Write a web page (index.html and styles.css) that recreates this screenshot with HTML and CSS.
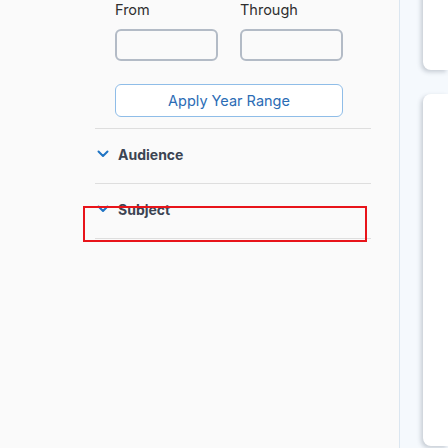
FILE: index.html
```html
<!DOCTYPE html>
<html>
<head>
<meta charset="utf-8">
<link rel="stylesheet" href="styles.css">
</head>
<body>
<div class="layout">
  <aside class="sidebar">
    <div class="filters">
      <div class="year-range">
        <div class="range-fields">
          <label class="field">
            <span class="field-label">From</span>
            <span class="field-input"></span>
          </label>
          <label class="field">
            <span class="field-label">Through</span>
            <span class="field-input"></span>
          </label>
        </div>
        <button class="apply-btn">Apply Year Range</button>
      </div>
      <div class="facet">
        <svg class="chev" width="12" height="8" viewBox="0 0 12 8"><path d="M1.5 1.5 L6 6 L10.5 1.5" fill="none" stroke="#1f74c4" stroke-width="2" stroke-linecap="round" stroke-linejoin="round"/></svg>
        <span class="facet-title">Audience</span>
      </div>
      <div class="facet">
        <svg class="chev" width="12" height="8" viewBox="0 0 12 8"><path d="M1.5 1.5 L6 6 L10.5 1.5" fill="none" stroke="#1f74c4" stroke-width="2" stroke-linecap="round" stroke-linejoin="round"/></svg>
        <span class="facet-title">Subject</span>
      </div>
    </div>
  </aside>
  <main class="content">
    <div class="card card-top"></div>
    <div class="card card-main"></div>
  </main>
</div>
<div class="focus-box"></div>
</body>
</html>
```
FILE: styles.css
```css
* { box-sizing: border-box; }
html, body { margin: 0; padding: 0; }
body {
  width: 448px;
  height: 448px;
  overflow: hidden;
  font-family: Inter, "Liberation Sans", sans-serif;
  background: #f5f9fd;
  position: relative;
}
.layout {
  display: flex;
  height: 448px;
}
.sidebar {
  width: 400px;
  flex: none;
  background: #fafafa;
  border-right: 1px solid #dbe6f0;
}
.filters {
  margin-left: 95px;
  width: 276px;
}
.year-range {
  padding: 0 28px 11px 20px;
  border-bottom: 1px solid #dedede;
}
.range-fields {
  display: flex;
  gap: 22px;
}
.field {
  display: flex;
  flex-direction: column;
  width: 103px;
}
.field-label {
  font-size: 14.5px;
  line-height: 20px;
  color: #2f2f2f;
}
.field-input {
  margin-top: 9px;
  height: 32px;
  border: 2px solid #b3bbc6;
  border-radius: 6px;
  background: #fafafa;
}
.apply-btn {
  display: block;
  margin-top: 23px;
  width: 228px;
  height: 33px;
  border: 1px solid #8fbde8;
  border-radius: 6px;
  background: #ffffff;
  color: #2b6cb5;
  font-family: Inter, "Liberation Sans", sans-serif;
  font-size: 14.5px;
  padding: 0;
}
.facet {
  display: flex;
  align-items: center;
  height: 55px;
  border-bottom: 1px solid #dedede;
  padding-left: 2px;
  padding-bottom: 4px;
}
.chev {
  flex: none;
  margin-right: 9px;
  margin-top: -1px;
}
.facet-title {
  font-size: 14px;
  font-weight: 700;
  color: #3c4452;
}
.content {
  flex: 1;
  padding-left: 23px;
  display: flex;
  flex-direction: column;
  gap: 24px;
}
.card {
  background: #ffffff;
  border-radius: 8px 0 0 8px;
  box-shadow: -2px 2px 4px rgba(60, 70, 90, 0.25);
}
.card-top {
  margin-top: -10px;
  height: 80px;
  border-radius: 0 0 0 8px;
}
.card-main {
  height: 352px;
}
.focus-box {
  position: absolute;
  left: 83px;
  top: 206px;
  width: 284px;
  height: 36px;
  border: 2px solid #e8141a;
  pointer-events: none;
}
```
